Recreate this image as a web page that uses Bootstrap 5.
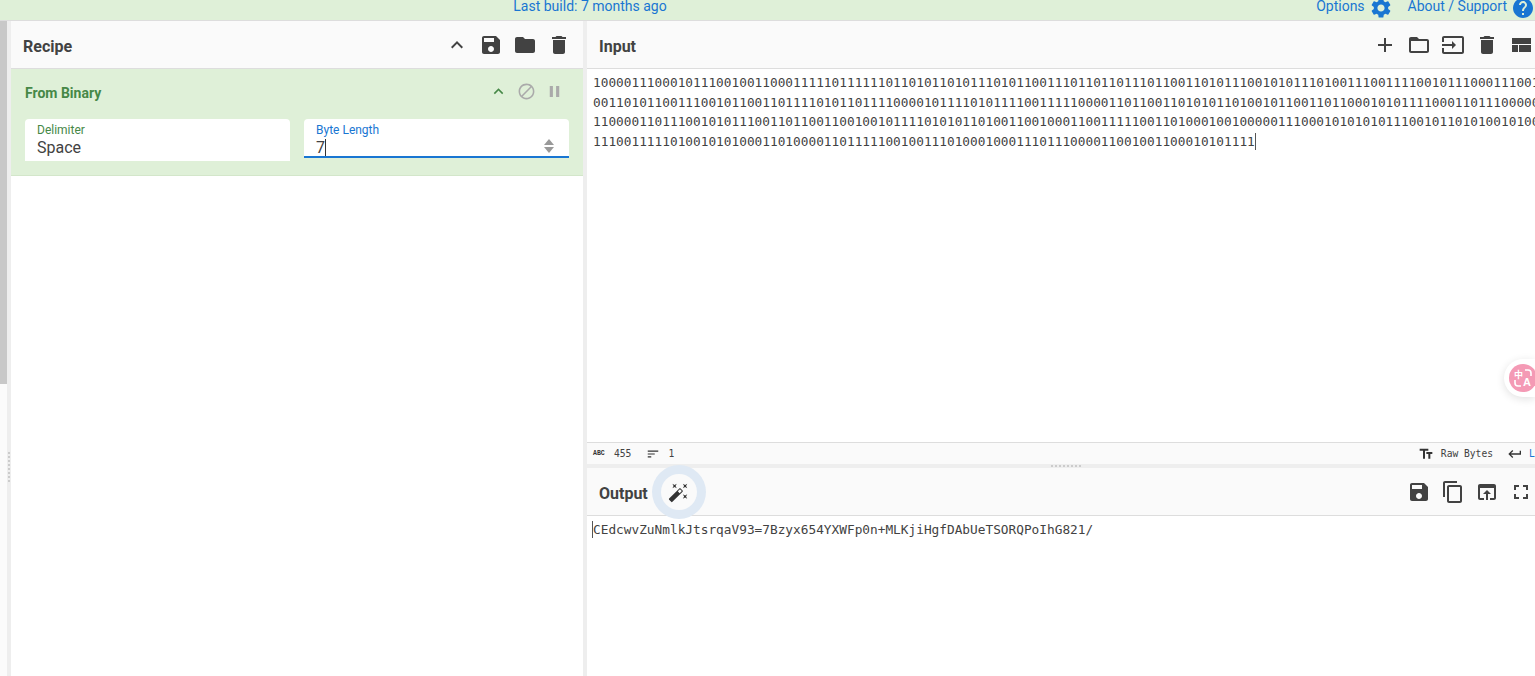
<!DOCTYPE html>
<html lang="en">
<head>
<meta charset="utf-8">
<title>CyberChef</title>
<link rel="stylesheet" href="https://cdn.jsdelivr.net/npm/bootstrap@5.3.0/dist/css/bootstrap.min.css">
<style>
html,body{height:676px;overflow:hidden}
body{font-family:Roboto,"Noto Sans",sans-serif;color:#333;background:#fff}
.cc-banner{height:21px;background:#dff0d8;border-bottom:1px solid #ddd;font-size:14px;line-height:13px;color:#1976d2}
.cc-banner .cc-build{width:1180px;text-align:center}
.cc-banner svg{fill:#1976d2;width:24px;height:24px;margin-top:-4px}
.cc-about{margin-left:15px}
.cc-main{height:655px}
.cc-thumbcol{width:7px;background:#fbfbfb;flex:none}
.cc-thumb{height:363px;background:#c8c8c8}
.cc-gutter{width:4px;background:#eee;flex:none}
.cc-gutter-dots{height:100%;display:flex;flex-direction:column;justify-content:flex-start;align-items:center;gap:2px;padding-top:431px}
.cc-gutter-dots i{width:2px;height:2px;background:#ccc;display:block}
.cc-recipe{width:572px;flex:none}
.cc-recipe .cc-head{padding-left:12px}
.cc-head{height:48px;background:#fafafa;border-bottom:1px solid #ddd;flex:none}
.cc-title{font-size:16px;font-weight:700;color:#424242;padding-top:4px}
.cc-head svg{width:24px;height:24px;fill:#424242;flex:none}
.cc-op{height:107px;background:#dff0d8;border-bottom:1px solid #d3e6ca;padding:0 14px;flex:none}
.cc-optitle{font-size:14px;font-weight:700;color:#468847;height:48px;margin-bottom:2px}
.cc-opicons svg{width:19px;height:19px;fill:#aaa}
.cc-field{width:265px;background:#fff;border-radius:4px 4px 0 0;padding:4px 12px 0;position:relative}
.cc-label{font-size:12px;line-height:14px;color:#468847}
.cc-value{font-size:16px;line-height:22px;color:#424242}
.cc-field-on{height:39px;border-bottom:2px solid #1976d2}
.cc-field-off{height:42px}
.cc-field-on .cc-label{color:#1976d2}
.cc-caret{display:inline-block;width:1px;height:17px;background:#333;vertical-align:-3px}
.cc-spin{position:absolute;right:15px;top:20px;width:10px;display:flex;flex-direction:column;gap:2px}
.cc-spin i{display:block;border-left:5px solid transparent;border-right:5px solid transparent}
.cc-spin i:first-child{border-bottom:6px solid #999}
.cc-spin i:last-child{border-top:6px solid #999}
.cc-right{width:948px;flex:none;overflow:hidden}
.cc-right .cc-head{padding-left:12px}
.cc-input{height:373px;padding:4px 0 0 6px;overflow:hidden;position:relative}
.cc-mono{font-family:"DejaVu Sans Mono",monospace;font-size:12.79px;line-height:19.5px;color:#424242;white-space:pre}
.cc-status{height:22px;background:#fafafa;border-top:1px solid #ddd;font-family:"DejaVu Sans Mono",monospace;font-size:9.65px;color:#424242;padding-left:6px}
.cc-status svg{fill:#333;flex:none}
.cc-status span{padding-top:1px}
.cc-abc{font-family:"Liberation Mono",monospace;font-size:6.5px;font-weight:700;width:15px;color:#333}
.cc-hgutter{height:4px;background:#eee;display:flex;justify-content:center;align-items:center;gap:2px;flex:none;padding-left:10px}
.cc-hgutter i{display:block;width:2px;height:2px;background:#ccc}
.cc-wand{width:36px;height:36px;border-radius:50%;background:#fafafa;box-shadow:0 0 0 9px #dfe9f4;margin:1px 0 0 7px;position:relative;z-index:2}
.cc-output-title{margin-right:6px}
.cc-wand svg{width:21px;height:21px}
.cc-output{padding:4px 0 0 5px}
.cc-caret2{display:inline-block;width:1px;height:17px;background:#555;vertical-align:-4px}
.cc-trans{position:absolute;right:0;top:338px;width:31px;height:38px;background:#fff;border-radius:19px 0 0 19px;box-shadow:0 2px 8px rgba(0,0,0,.12);z-index:3}
.cc-trans-in{width:28px;height:28px;border-radius:50%;background:#f49ab5;color:#fff;margin:5px 0 0 5px;position:relative;font-family:"Noto Sans CJK SC",sans-serif;font-weight:700}
.cc-trans-in svg{position:absolute;left:0;top:0;width:28px;height:28px}
.cc-zh{position:absolute;left:5px;top:5px;font-size:9px;line-height:11px}
.cc-en{position:absolute;left:14px;top:12px;font-family:"Liberation Sans",sans-serif;font-size:11px;line-height:12px}
</style>
</head>
<body>
<div class="cc-banner d-flex">
  <div class="cc-build">Last build: 7 months ago</div>
  <div class="d-flex flex-grow-1 justify-content-end">
    <span>Options</span>
    <svg class="ms-1" viewBox="0 0 24 24"><path d="M19.14 12.94c.04-.3.06-.61.06-.94 0-.32-.02-.64-.07-.94l2.03-1.58c.18-.14.23-.41.12-.61l-1.92-3.32c-.12-.22-.37-.29-.59-.22l-2.39.96c-.5-.38-1.03-.7-1.62-.94l-.36-2.54c-.04-.24-.24-.41-.48-.41h-3.84c-.24 0-.43.17-.47.41l-.36 2.54c-.59.24-1.13.57-1.62.94l-2.39-.96c-.22-.08-.47 0-.59.22L2.74 8.87c-.12.21-.08.47.12.61l2.03 1.58c-.05.3-.09.63-.09.94s.02.64.07.94l-2.03 1.58c-.18.14-.23.41-.12.61l1.92 3.32c.12.22.37.29.59.22l2.39-.96c.5.38 1.03.7 1.62.94l.36 2.54c.05.24.24.41.48.41h3.84c.24 0 .44-.17.47-.41l.36-2.54c.59-.24 1.13-.56 1.62-.94l2.39.96c.22.08.47 0 .59-.22l1.92-3.32c.12-.22.07-.47-.12-.61l-2.01-1.58zM12 15.6c-1.98 0-3.6-1.62-3.6-3.6s1.62-3.6 3.6-3.6 3.6 1.62 3.6 3.6-1.62 3.6-3.6 3.6z"/></svg>
    <span class="cc-about">About / Support</span>
    <svg class="ms-1" viewBox="0 0 24 24"><path d="M12 2C6.48 2 2 6.48 2 12s4.48 10 10 10 10-4.48 10-10S17.52 2 12 2zm1 17h-2v-2h2v2zm2.07-7.75l-.9.92C13.45 12.9 13 13.5 13 15h-2v-.5c0-1.1.45-2.1 1.17-2.83l1.24-1.26c.37-.36.59-.86.59-1.41 0-1.1-.9-2-2-2s-2 .9-2 2H8c0-2.21 1.79-4 4-4s4 1.79 4 4c0 .88-.36 1.68-.93 2.25z"/></svg>
  </div>
</div>
<div class="cc-main d-flex position-relative">
  <div class="cc-thumbcol"><div class="cc-thumb"></div></div>
  <div class="cc-gutter"><div class="cc-gutter-dots"><i></i><i></i><i></i><i></i><i></i><i></i><i></i><i></i></div></div>
  <div class="cc-recipe d-flex flex-column">
    <div class="cc-head d-flex align-items-center justify-content-between">
      <span class="cc-title">Recipe</span>
      <div class="d-flex align-items-center" style="gap:10px;padding-right:12px">
        <svg viewBox="0 0 24 24"><path d="M7.41 15.41L12 10.83l4.59 4.58L18 14l-6-6-6 6z"/></svg>
        <svg viewBox="0 0 24 24"><path d="M17 3H5c-1.11 0-2 .9-2 2v14c0 1.1.89 2 2 2h14c1.1 0 2-.9 2-2V7l-4-4zm-5 16c-1.66 0-3-1.34-3-3s1.34-3 3-3 3 1.34 3 3-1.34 3-3 3zm3-10H5V5h10v4z"/></svg>
        <svg viewBox="0 0 24 24"><path d="M10 4H4c-1.1 0-1.99.9-1.99 2L2 18c0 1.1.9 2 2 2h16c1.1 0 2-.9 2-2V8c0-1.1-.9-2-2-2h-8l-2-2z"/></svg>
        <svg viewBox="0 0 24 24"><path d="M6 19c0 1.1.9 2 2 2h8c1.1 0 2-.9 2-2V7H6v12zM19 4h-3.5l-1-1h-5l-1 1H5v2h14V4z"/></svg>
      </div>
    </div>
    <div class="cc-op">
      <div class="cc-optitle d-flex align-items-center justify-content-between">
        <span>From Binary</span>
        <div class="cc-opicons d-flex align-items-center" style="gap:9px;padding-right:5px;margin-top:-4px">
          <svg viewBox="0 0 24 24" style="fill:#468847"><path d="M7.41 15.41L12 10.83l4.59 4.58L18 14l-6-6-6 6z"/></svg>
          <svg viewBox="0 0 24 24"><path d="M12 2C6.48 2 2 6.48 2 12s4.48 10 10 10 10-4.48 10-10S17.52 2 12 2zM4 12c0-4.42 3.58-8 8-8 1.85 0 3.55.63 4.9 1.69L5.69 16.9C4.63 15.55 4 13.85 4 12zm8 8c-1.85 0-3.55-.63-4.9-1.69L18.31 7.1C19.37 8.45 20 10.15 20 12c0 4.42-3.58 8-8 8z"/></svg>
          <svg viewBox="0 0 24 24"><path d="M6 19h4V5H6v14zm8-14v14h4V5h-4z"/></svg>
        </div>
      </div>
      <div class="d-flex align-items-start" style="gap:14px">
        <div class="cc-field cc-field-off"><div class="cc-label">Delimiter</div><div class="cc-value">Space</div></div>
        <div class="cc-field cc-field-on"><div class="cc-label">Byte Length</div><div class="cc-value">7<span class="cc-caret"></span></div><div class="cc-spin"><i></i><i></i></div></div>
      </div>
    </div>
    <div class="flex-grow-1 bg-white"></div>
  </div>
  <div class="cc-gutter"></div>
  <div class="cc-right d-flex flex-column position-relative">
    <div class="cc-head d-flex align-items-center justify-content-between">
      <span class="cc-title">Input</span>
      <div class="d-flex align-items-center" style="gap:10px;padding-right:2px">
        <svg viewBox="0 0 24 24"><path d="M19 13h-6v6h-2v-6H5v-2h6V5h2v6h6v2z"/></svg>
        <svg viewBox="0 0 24 24"><path d="M20 6h-8l-2-2H4c-1.1 0-1.99.9-1.99 2L2 18c0 1.1.9 2 2 2h16c1.1 0 2-.9 2-2V8c0-1.1-.9-2-2-2zm0 12H4V8h16v10z"/></svg>
        <svg viewBox="0 0 24 24"><path d="M21 3.01H3c-1.1 0-2 .9-2 2V9h2V4.99h18v14.03H3V15H1v4.01c0 1.1.9 1.98 2 1.98h18c1.1 0 2-.88 2-1.98v-14c0-1.11-.9-2-2-2zM11 16l4-4-4-4v3H1v2h10v3z"/></svg>
        <svg viewBox="0 0 24 24"><path d="M6 19c0 1.1.9 2 2 2h8c1.1 0 2-.9 2-2V7H6v12zM19 4h-3.5l-1-1h-5l-1 1H5v2h14V4z"/></svg>
        <svg viewBox="0 0 24 24"><path d="M3 19h6v-7H3v7zm7 0h12v-7H10v7zM3 5v6h19V5H3z"/></svg>
      </div>
    </div>
    <div class="cc-input cc-mono">100001110001011100100110001111101111110110101101011101011001110110110111011001101011100101011101001110011110010111000111001
001101011001110010110011011110101101111000010111101011110011111000011011001101010110100101100110110001010111100011011100000
110000110111001010111001101100110010010111101010110100110010001100111110011010001001000001110001010101011100101101010010100
11100111110100101010001101000011011111001001110100010001110111000011001001100010101111<span class="cc-caret2"></span></div>
    <div class="cc-status d-flex align-items-center">
      <span class="cc-abc">ABC</span><span style="margin-left:6px">455</span>
      <svg style="margin-left:15px" width="14" height="14" viewBox="0 0 24 24"><path d="M3 18h6v-2H3v2zM3 6v2h18V6H3zm0 7h12v-2H3v2z"/></svg>
      <span class="ms-2">1</span>
      <div class="flex-grow-1"></div>
      <svg width="16" height="16" viewBox="0 0 24 24"><path d="M2.5 4v3h5v12h3V7h5V4h-13zm19 5h-9v3h3v7h3v-7h3V9z"/></svg>
      <span style="margin-left:7px">Raw Bytes</span>
      <svg width="16" height="16" viewBox="0 0 24 24" style="margin-left:14px"><path d="M19 7v4H5.83l3.58-3.59L8 6l-6 6 6 6 1.41-1.41L5.83 13H21V7z"/></svg>
      <span style="color:#1976d2;margin-left:6px;width:6px;overflow:hidden">L</span>
    </div>
    <div class="cc-hgutter"><i></i><i></i><i></i><i></i><i></i><i></i><i></i><i></i></div>
    <div class="cc-head d-flex align-items-center justify-content-between">
      <div class="d-flex align-items-center">
        <span class="cc-title cc-output-title">Output</span>
        <div class="cc-wand d-flex align-items-center justify-content-center">
          <svg viewBox="0 0 24 24"><path fill="#333" d="M7.5 5.6L10 7 8.6 4.5 10 2 7.5 3.4 5 2l1.4 2.5L5 7zm12 9.8L17 14l1.4 2.5L17 19l2.5-1.4L22 19l-1.4-2.5L22 14zM22 2l-2.5 1.4L17 2l1.4 2.5L17 7l2.5-1.4L22 7l-1.4-2.5zm-7.63 5.29a.9959.9959 0 0 0-1.41 0L1.29 18.96c-.39.39-.39 1.02 0 1.41l2.34 2.34c.39.39 1.02.39 1.41 0L16.7 11.05c.39-.39.39-1.02 0-1.41l-2.33-2.35zm-1.03 5.49l-2.12-2.12 2.44-2.44 2.12 2.12-2.44 2.44z"/></svg>
        </div>
      </div>
      <div class="d-flex align-items-center" style="gap:10px;padding-right:2px">
        <svg viewBox="0 0 24 24"><path d="M17 3H5c-1.11 0-2 .9-2 2v14c0 1.1.89 2 2 2h14c1.1 0 2-.9 2-2V7l-4-4zm-5 16c-1.66 0-3-1.34-3-3s1.34-3 3-3 3 1.34 3 3-1.34 3-3 3zm3-10H5V5h10v4z"/></svg>
        <svg viewBox="0 0 24 24"><path d="M16 1H4c-1.1 0-2 .9-2 2v14h2V3h12V1zm3 4H8c-1.1 0-2 .9-2 2v14c0 1.1.9 2 2 2h11c1.1 0 2-.9 2-2V7c0-1.1-.9-2-2-2zm0 16H8V7h11v14z"/></svg>
        <svg viewBox="0 0 24 24"><path d="M19 4H5c-1.11 0-2 .9-2 2v12c0 1.1.89 2 2 2h4v-2H5V8h14v10h-4v2h4c1.1 0 2-.9 2-2V6c0-1.1-.89-2-2-2zm-7 6l-4 4h3v6h2v-6h3l-4-4z"/></svg>
        <svg viewBox="0 0 24 24"><path d="M7 14H5v5h5v-2H7v-3zm-2-4h2V7h3V5H5v5zm12 7h-3v2h5v-5h-2v3zM14 5v2h3v3h2V5h-5z"/></svg>
      </div>
    </div>
    <div class="cc-output cc-mono"><span class="cc-caret2"></span>CEdcwvZuNmlkJtsrqaV93=7Bzyx654YXWFp0n+MLKjiHgfDAbUeTSORQPoIhG821/</div>
    <div class="cc-trans"><div class="cc-trans-in"><svg viewBox="0 0 28 28"><path d="M16 6h3a3 3 0 0 1 3 3v3M6 16v3a3 3 0 0 0 3 3h3" fill="none" stroke="#fff" stroke-width="1.6"/></svg><span class="cc-zh">中</span><span class="cc-en">A</span></div></div>
  </div>
</div>
</body>
</html>
